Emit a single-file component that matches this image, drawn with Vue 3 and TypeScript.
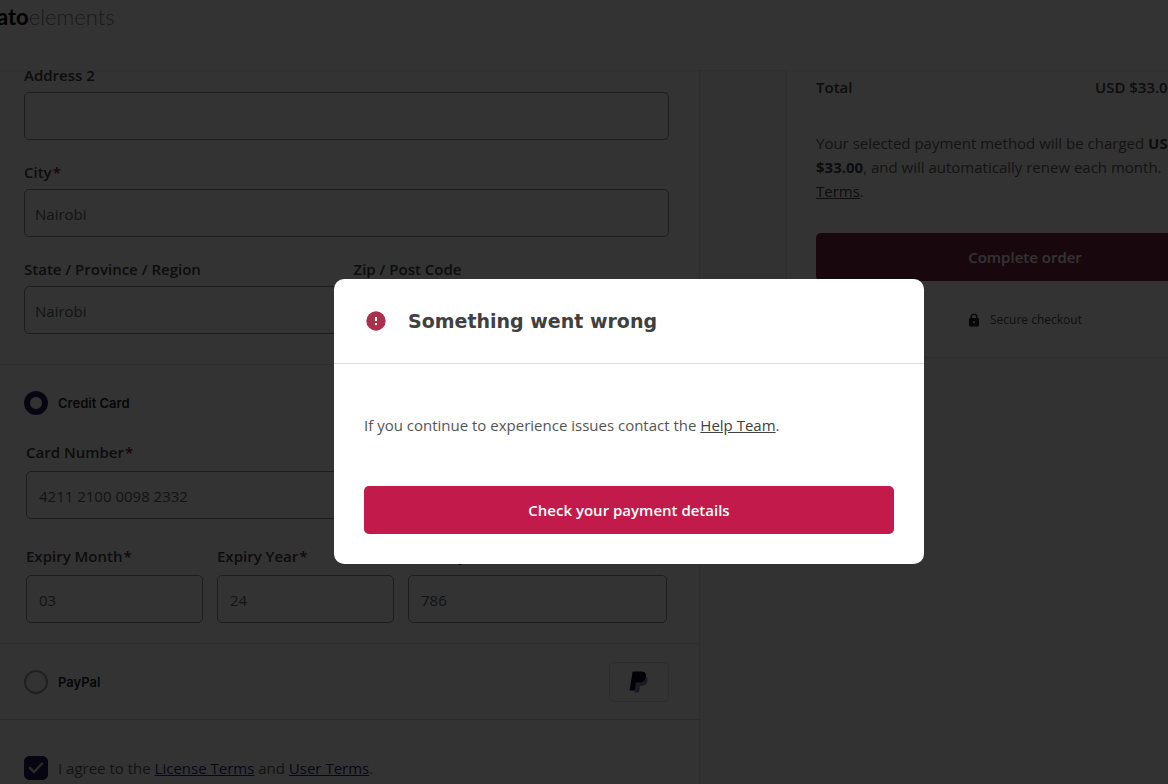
<script setup lang="ts">
import { ref } from 'vue'

const address2 = ref<string>('')
const city = ref<string>('Nairobi')
const region = ref<string>('Nairobi')
const postCode = ref<string>('')
const cardNumber = ref<string>('4211 2100 0098 2332')
const expiryMonth = ref<string>('03')
const expiryYear = ref<string>('24')
const securityCode = ref<string>('786')
const method = ref<'card' | 'paypal'>('card')
const agreed = ref<boolean>(true)
const modalOpen = ref<boolean>(true)
</script>

<template>
  <div class="page">
    <header class="topbar">
      <a class="logo" href="#"><span class="logo-strong">ato</span><span class="logo-light">elements</span></a>
    </header>

    <main class="checkout">
      <form class="details" @submit.prevent>
        <section class="address">
          <div class="field">
            <label for="address2">Address 2</label>
            <input id="address2" v-model="address2" type="text" />
          </div>
          <div class="field">
            <label for="city">City<span class="req">*</span></label>
            <input id="city" v-model="city" type="text" />
          </div>
          <div class="pair">
            <div class="field">
              <label for="region">State / Province / Region</label>
              <input id="region" v-model="region" type="text" />
            </div>
            <div class="field">
              <label for="post">Zip / Post Code</label>
              <input id="post" v-model="postCode" type="text" />
            </div>
          </div>
        </section>

        <section class="card-section">
          <label class="method"><input v-model="method" type="radio" name="method" value="card" />Credit Card</label>
          <div class="card-fields">
            <div class="field number">
              <label for="number">Card Number<span class="req">*</span></label>
              <input id="number" v-model="cardNumber" type="text" />
            </div>
            <div class="field">
              <label for="month">Expiry Month<span class="req">*</span></label>
              <input id="month" v-model="expiryMonth" type="text" />
            </div>
            <div class="field">
              <label for="year">Expiry Year<span class="req">*</span></label>
              <input id="year" v-model="expiryYear" type="text" />
            </div>
            <div class="field">
              <label for="code">Security Code<span class="req">*</span></label>
              <input id="code" v-model="securityCode" type="text" />
            </div>
          </div>
        </section>

        <section class="paypal-section">
          <label class="method"><input v-model="method" type="radio" name="method" value="paypal" />PayPal</label>
          <span class="paypal-badge">
            <svg width="20" height="24" viewBox="0 0 20 24" aria-hidden="true">
              <path d="M16.6 6.2c2.2 1.200 2.400 3.700 1.500 6-1 2.700-3.200 3.800-6.200 3.800h-.9l-1 6.500H5.300L7.500 9z" fill="#8c88b4" />
              <path d="M3.600 1.500h8.600c3.700 0 5.400 2.200 4.700 5.400-.8 3.900-3.500 5.700-7.400 5.700H7l-1.300 7.900H.6z" fill="#0a0635" />
            </svg>
          </span>
        </section>

        <section class="agree">
          <span class="tick-wrap">
            <input id="agree" v-model="agreed" type="checkbox" />
            <svg v-if="agreed" class="tick" width="24" height="24" viewBox="0 0 24 24" aria-hidden="true">
              <path d="M6 12l4 4 8-8.500" fill="none" stroke="#d0d0d0" stroke-width="2.500" stroke-linecap="round" stroke-linejoin="round" />
            </svg>
          </span>
          <label for="agree">I agree to the <a href="#">License Terms</a> and <a href="#">User Terms</a>.</label>
        </section>
      </form>

      <aside class="summary">
        <div class="total"><span>Total</span><span class="amount">USD $33.00</span></div>
        <p class="notice">
          Your selected payment method will be charged <b>USD</b><br />
          <b>$33.00</b>, and will automatically renew each month. <br />
          <a href="#">Terms</a>.
        </p>
        <button class="complete" type="button">Complete order</button>
        <p class="secure">
          <svg width="12" height="14" viewBox="0 0 12 14" aria-hidden="true">
            <path d="M3.200 6V4a2.800 2.800 0 0 1 5.600 0v2" fill="none" stroke="#262626" stroke-width="1.500" />
            <rect x="1" y="5" width="10" height="8.500" rx="1" fill="#262626" />
            <circle cx="6" cy="9.300" r="1.100" fill="#fff" />
          </svg>
          Secure checkout
        </p>
      </aside>
    </main>

    <div v-if="modalOpen" class="overlay">
      <div class="modal" role="dialog" aria-modal="true" aria-labelledby="modal-title">
        <div class="modal-head">
          <svg width="24" height="24" viewBox="0 0 24 24" aria-hidden="true">
            <circle cx="12" cy="12" r="9.700" fill="#aa314b" />
            <rect x="11" y="8" width="2" height="4" fill="#fff" />
            <rect x="11" y="14" width="2" height="2" fill="#fff" />
          </svg>
          <h2 id="modal-title">Something went wrong</h2>
        </div>
        <div class="modal-body">
          <p>If you continue to experience issues contact the <a href="#">Help Team</a>.</p>
          <button type="button" @click="modalOpen = false">Check your payment details</button>
        </div>
      </div>
    </div>
  </div>
</template>

<style>
body {
  margin: 0;
}
</style>

<style scoped>
* {
  box-sizing: border-box;
}

.page {
  position: relative;
  display: flex;
  flex-direction: column;
  height: 100vh;
  overflow: hidden;
  background: #fafafa;
  color: #404040;
  font: 15px/24px "Open Sans", "Noto Sans", sans-serif;
}

.topbar {
  position: relative;
  z-index: 1;
  flex: none;
  height: 70px;
  padding-top: 4px;
  background: #fff;
  box-shadow: 0 1px 2px rgba(0, 0, 0, 0.1);
}

.logo {
  display: flex;
  margin-left: -3px;
  font-family: Lato, sans-serif;
  font-size: 22px;
  line-height: 26px;
  color: #000;
  text-decoration: none;
}

.logo-strong {
  font-weight: 700;
}

.logo-light {
  font-weight: 300;
  color: #808080;
}

.checkout {
  display: flex;
  flex: 1;
  align-items: flex-start;
  gap: 86px;
  margin-top: -7px;
}

.details {
  flex: 1;
  min-width: 0;
  border-right: 1px solid #e0e0e0;
  background: #fff;
}

.address {
  display: flex;
  flex-direction: column;
  gap: 20px;
  padding: 0 30px 30px 24px;
}

.pair {
  display: grid;
  grid-template-columns: 1fr 1fr;
  gap: 14px;
}

.field {
  display: flex;
  flex-direction: column;
  gap: 5px;
  min-width: 0;
  font-weight: 600;
}

.req {
  margin-left: 1px;
  color: #6c2036;
}

.field input {
  width: 100%;
  height: 48px;
  padding: 2px 10px 0;
  border: 1px solid #909090;
  border-radius: 5px;
  background: #fff;
  color: #606060;
  font: inherit;
  font-weight: 400;
}

.card-section {
  display: flex;
  flex-direction: column;
  gap: 25px;
  padding: 26px 32px 20px 24px;
  border-top: 1px solid #e0e0e0;
}

.method {
  display: flex;
  align-items: center;
  gap: 10px;
  font: 600 13px/24px "Inter", sans-serif;
  color: #262626;
}

.method input {
  width: 24px;
  height: 24px;
  margin: 0;
  appearance: none;
  border: 2px solid #a0a0a0;
  border-radius: 50%;
  background: #fff;
}

.method input:checked {
  border: 6px solid #2c1a5c;
}

.card-fields {
  display: grid;
  grid-template-columns: 177fr 177fr 259fr;
  gap: 25px 14px;
  margin-left: 2px;
}

.card-fields .field {
  gap: 7px;
}

.card-fields input {
  padding-left: 12px;
}

.number {
  grid-column: 1 / -1;
}

.paypal-section {
  display: flex;
  align-items: center;
  justify-content: space-between;
  padding: 18px 30px 17px 24px;
  border-top: 1px solid #e0e0e0;
}

.paypal-badge {
  display: flex;
  align-items: center;
  justify-content: center;
  width: 60px;
  height: 40px;
  border: 1px solid #dcdcdc;
  border-radius: 5px;
}

.agree {
  display: flex;
  align-items: center;
  gap: 10px;
  padding: 36px 24px;
  border-top: 1px solid #d4d4d4;
  color: #606060;
}

.agree a {
  color: #2c2470;
}

.tick-wrap {
  position: relative;
  display: flex;
}

.tick-wrap input {
  width: 24px;
  height: 24px;
  margin: 0;
  appearance: none;
  border: 1px solid #2c1a5c;
  border-radius: 5px;
  background: #fff;
}

.tick-wrap input:checked {
  background: #2c1a5c;
}

.tick {
  position: absolute;
  inset: 0;
  pointer-events: none;
}

.summary {
  flex: none;
  width: 478px;
  margin-right: -96px;
  padding: 12px 29px 25px;
  border: 1px solid #e4e4e4;
  border-top: 0;
  background: #fff;
}

.total {
  display: flex;
  justify-content: space-between;
  font-weight: 600;
}

.amount {
  flex: 0 0 139px;
}

.notice {
  margin: 32px 0 30px;
  color: #606060;
  white-space: nowrap;
}

.notice b {
  color: #404040;
}

.notice a {
  color: #404040;
}

button {
  display: block;
  width: 100%;
  height: 48px;
  padding: 0;
  border: 0;
  border-radius: 5px;
  color: #fff;
  font: inherit;
  font-weight: 600;
  cursor: pointer;
}

.complete {
  background: #7d2345;
}

.secure {
  display: flex;
  align-items: center;
  justify-content: center;
  gap: 10px;
  margin: 27px 0 0;
  font-size: 12px;
  color: #505050;
}

.overlay {
  position: absolute;
  inset: 0;
  z-index: 2;
  display: flex;
  align-items: center;
  justify-content: center;
  padding: 59px 0 0 90px;
  background: rgba(0, 0, 0, 0.8);
}

.modal {
  width: 590px;
  max-width: 100%;
  border-radius: 10px;
  background: #fff;
}

.modal-head {
  display: flex;
  align-items: center;
  gap: 20px;
  padding: 30px;
  border-bottom: 1px solid #dcdcdc;
}

.modal-head h2 {
  margin: 0;
  font: 700 19px/24px "DejaVu Sans", sans-serif;
}

.modal-body {
  padding: 49px 30px 30px;
}

.modal-body p {
  margin: 0 0 49px;
  color: #555;
}

.modal-body a {
  color: #404040;
}

.modal-body button {
  background: #c21a4a;
}
</style>
